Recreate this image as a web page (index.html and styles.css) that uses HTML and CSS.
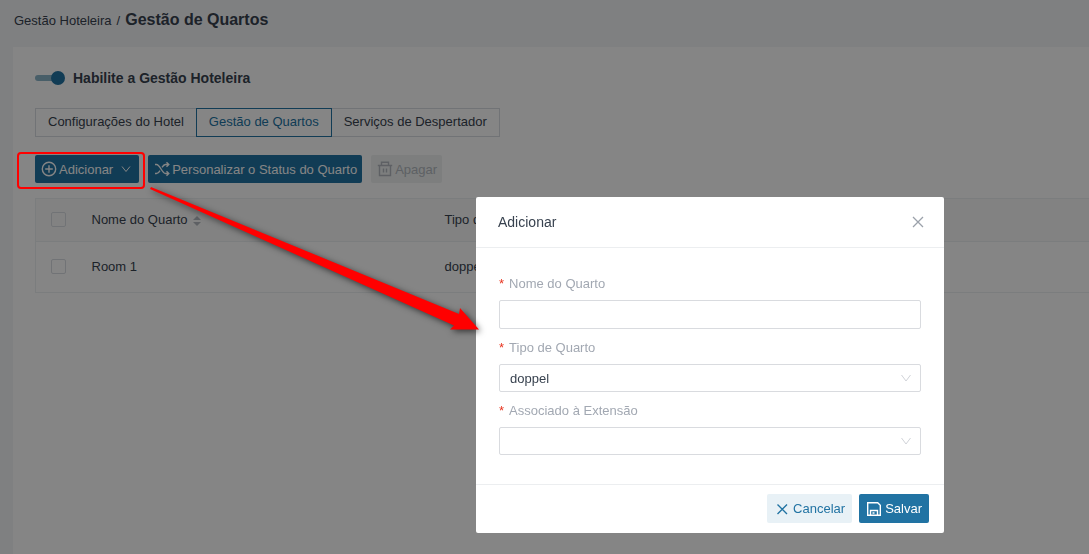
FILE: index.html
```html
<!DOCTYPE html>
<html lang="pt">
<head>
    <meta charset="UTF-8">
    <meta name="viewport" content="width=device-width, initial-scale=1.0">
    <title>Gestão de Quartos</title>
    <link rel="stylesheet" href="styles.css">
</head>
<body>
    <nav class="breadcrumb">
        <a href="#">Gestão Hoteleira</a>
        <span>/</span>
        <h1>Gestão de Quartos</h1>
    </nav>

    <main class="card">
        <label class="switch">
            <input type="checkbox" role="switch" checked>
            <span>Habilite a Gestão Hoteleira</span>
        </label>

        <div class="tabs">
            <button type="button" class="tab">Configurações do Hotel</button>
            <button type="button" class="tab active">Gestão de Quartos</button>
            <button type="button" class="tab">Serviços de Despertador</button>
        </div>

        <div class="toolbar">
            <button type="button" class="btn primary">
                <svg class="icon" viewBox="0 0 16 16"><circle cx="8" cy="8" r="6.7"/><path d="M8 4.2v7.6M4.2 8h7.6"/></svg>
                Adicionar
                <svg class="icon caret" viewBox="0 0 10 10"><path d="M1 2.5l4 5 4-5"/></svg>
            </button>
            <button type="button" class="btn primary">
                <svg class="icon" viewBox="0 0 16 16"><path d="M1 3.500h1.500c3.500 0 5.500 9 9 9h3M1 12.500h1.500c1.500 0 2.600-1.300 3.500-2.900M8 6.400c1-1.600 2-2.900 3.500-2.900h3M12.500 1.300l2.300 2.200-2.300 2.200M12.500 10.300l2.300 2.200-2.300 2.200"/></svg>
                Personalizar o Status do Quarto
            </button>
            <button type="button" class="btn" disabled>
                <svg class="icon" viewBox="0 0 16 16"><path d="M.8 4.500h14.400M4.500 4.300v-3h7v3M2.500 4.500v10h11v-10M6.500 7.500v4M9.500 7.500v4"/></svg>
                Apagar
            </button>
        </div>

        <table class="rooms">
            <thead>
                <tr>
                    <th class="check"><input type="checkbox" aria-label="Selecionar todos"></th>
                    <th class="name">Nome do Quarto
                        <svg class="sort" viewBox="0 0 8 12"><path d="M4 1l4 4H0zM4 11l4-4H0z"/></svg>
                    </th>
                    <th>Tipo de Quarto</th>
                </tr>
            </thead>
            <tbody>
                <tr>
                    <td class="check"><input type="checkbox" aria-label="Selecionar Room 1"></td>
                    <td>Room 1</td>
                    <td>doppel</td>
                </tr>
            </tbody>
        </table>
    </main>

    <div class="mask"></div>

    <div class="highlight"></div>

    <form class="modal" role="dialog" aria-labelledby="modalTitle">
        <header>
            <h2 id="modalTitle">Adicionar</h2>
            <button type="button" class="close" aria-label="Fechar">
                <svg viewBox="0 0 12 12"><path d="M1 1l10 10M11 1L1 11"/></svg>
            </button>
        </header>
        <div class="fields">
            <label for="roomName">Nome do Quarto</label>
            <input type="text" id="roomName">
            <label for="roomType">Tipo de Quarto</label>
            <div class="select">
                <select id="roomType"><option>doppel</option></select>
                <svg viewBox="0 0 10 8"><path d="M.5 1L5 7l4.500-6"/></svg>
            </div>
            <label for="extension">Associado à Extensão</label>
            <div class="select">
                <select id="extension"><option></option></select>
                <svg viewBox="0 0 10 8"><path d="M.5 1L5 7l4.500-6"/></svg>
            </div>
        </div>
        <footer>
            <button type="button" class="btn light">
                <svg class="icon" viewBox="0 0 16 16"><path d="M3.500 3.500l9.500 9.500M13 3.500l-9.500 9.500"/></svg>
                Cancelar
            </button>
            <button type="submit" class="btn primary">
                <svg class="icon" viewBox="0 0 16 16"><path d="M1.700 1.700h10l2.600 2.600v10H1.700zM4.500 14v-4.500h7V14M6.500 12h2"/></svg>
                Salvar
            </button>
        </footer>
    </form>

    <svg class="arrow" viewBox="0 0 330 146"><path d="M1 0L309 127l1-6 19 21.500h-29l4-4L0 2z"/></svg>
</body>
</html>
```
FILE: styles.css
```css
* {
    box-sizing: border-box;
}
body {
    margin: 0;
    min-height: 100vh;
    display: flex;
    flex-direction: column;
    background-color: #f3f5f8;
    color: #38424f;
    font-family: "Liberation Sans", Arial, sans-serif;
    font-size: 13px;
    overflow: hidden;
}
button, input, select {
    font: inherit;
    color: inherit;
}
h1, h2 {
    margin: 0;
}
svg {
    fill: none;
    stroke: currentColor;
}
.breadcrumb {
    display: flex;
    align-items: center;
    gap: 5px;
    height: 47px;
    padding: 0 14px 7px;
}
.breadcrumb a {
    color: inherit;
    text-decoration: none;
}
.breadcrumb h1 {
    font-size: 16px;
}
.card {
    flex: 1;
    margin-left: 13px;
    padding: 21px 0 0 22px;
    background-color: #fff;
}
.switch {
    display: flex;
    align-items: center;
    gap: 8px;
    height: 20px;
    font-size: 14px;
    font-weight: bold;
}
.switch input {
    appearance: none;
    display: flex;
    align-items: center;
    width: 30px;
    margin: 0;
}
.switch input::before {
    content: "";
    width: 24px;
    height: 6px;
    border-radius: 3px;
    background-color: #8ab5c8;
}
.switch input::after {
    content: "";
    width: 14px;
    height: 14px;
    margin-left: -8px;
    border-radius: 50%;
    background-color: #2173a3;
}
.tabs {
    display: flex;
    margin-top: 20px;
}
.tab {
    height: 29px;
    padding: 0 12px 2px;
    background-color: #fff;
    border: 1px solid #d9dde3;
    margin-right: -1px;
}
.tab.active {
    position: relative;
    border-color: #2173a3;
    color: #2173a3;
}
.toolbar {
    display: flex;
    gap: 9px;
    margin-top: 18px;
}
.btn {
    display: flex;
    align-items: center;
    gap: 2px;
    height: 28px;
    padding: 0 5px 0 6px;
    border: none;
    border-radius: 2px;
    background-color: #eff2f2;
    color: #b4b9c0;
}
.btn.primary {
    background-color: #2173a3;
    color: #fff;
}
.btn.light {
    background-color: #e8f1f6;
    color: #2173a3;
}
.icon {
    width: 16px;
    height: 16px;
    stroke-width: 1.4;
}
.caret {
    width: 10px;
    height: 10px;
    margin: 0 3px 0 6px;
    stroke-width: 1;
}
.rooms {
    width: 100%;
    margin-top: 15px;
    border: 1px solid #eceff2;
    border-right: none;
    border-collapse: collapse;
}
.rooms th, .rooms td {
    height: 51px;
    padding: 0 0 2px;
    text-align: left;
    font-weight: normal;
}
.rooms th {
    height: 43px;
    background-color: #fafafa;
    border-bottom: 1px solid #eceff2;
}
.rooms .check {
    width: 56px;
    padding-left: 15px;
}
.rooms .name {
    width: 353px;
}
.rooms input {
    appearance: none;
    display: block;
    width: 15px;
    height: 15px;
    margin: 0;
    border: 1px solid #d9dde3;
    border-radius: 2px;
}
.sort {
    width: 8px;
    height: 12px;
    margin-left: 2px;
    vertical-align: -3px;
    fill: #b4b9c0;
    stroke: none;
}
.mask {
    position: fixed;
    inset: 0;
    background-color: rgba(0, 0, 0, 0.48);
}
.highlight {
    position: absolute;
    left: 17px;
    top: 152px;
    width: 128px;
    height: 37px;
    border: 2px solid #f00;
    border-radius: 4px;
}
.modal {
    position: absolute;
    left: 476px;
    top: 197px;
    width: 468px;
    background-color: #fff;
    border-radius: 2px;
}
.modal header {
    display: flex;
    align-items: center;
    justify-content: space-between;
    height: 51px;
    padding: 0 20px 0 22px;
    border-bottom: 1px solid #eceef0;
}
.modal h2 {
    font-size: 14px;
    font-weight: normal;
}
.close {
    padding: 0;
    border: none;
    background: none;
    color: #9ba1aa;
}
.close svg {
    display: block;
    width: 12px;
    height: 12px;
    stroke-width: 1.3;
}
.fields {
    padding: 24px 23px 22px;
}
.fields label {
    display: block;
    height: 28px;
    line-height: 24px;
    color: #a2a8b2;
}
.fields label::before {
    content: "*";
    margin-right: 5px;
    color: #e8341f;
}
.fields input, .fields select {
    appearance: none;
    display: block;
    width: 100%;
    height: 28px;
    padding: 0 10px;
    border: 1px solid #d9dbdf;
    border-radius: 2px;
    background-color: #fff;
}
.fields input {
    height: 29px;
}
.fields input, .select {
    margin-bottom: 7px;
}
.select {
    position: relative;
}
.select svg {
    position: absolute;
    right: 10px;
    top: 10px;
    width: 10px;
    height: 8px;
    color: #d0d3d8;
}
.modal footer {
    display: flex;
    justify-content: flex-end;
    gap: 7px;
    padding: 9px 15px 10px;
    border-top: 1px solid #eceef0;
}
.modal .btn {
    height: 29px;
    padding: 0 7px;
    gap: 3px;
}
.arrow {
    position: absolute;
    left: 150px;
    top: 187px;
    width: 330px;
    height: 146px;
    fill: #f00;
    stroke: none;
    filter: drop-shadow(2px 2px 3px rgba(0, 0, 0, 0.6));
    pointer-events: none;
}
```
